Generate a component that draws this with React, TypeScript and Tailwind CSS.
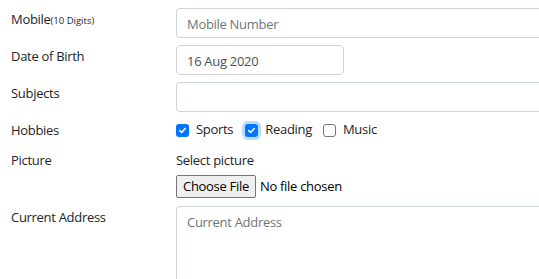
import React from "react";

const Check = ({ checked, focus }: { checked: boolean; focus?: boolean }) => (
  <span
    className={
      "inline-flex h-[13px] w-[13px] shrink-0 items-center justify-center rounded-[3px] " +
      (checked ? "bg-[#0075ff] " : "border border-[#767676] bg-white ") +
      (focus ? "shadow-[0_0_0_3px_#bcdcff]" : "")
    }
  >
    {checked && (
      <svg width="9" height="9" viewBox="0 0 10 10">
        <path d="M2 5.2 L4.1 7.2 L8 2.8" fill="none" stroke="white" strokeWidth="1.8" strokeLinecap="round" strokeLinejoin="round" />
      </svg>
    )}
  </span>
);

export default function App() {
  return (
    <div
      className="h-[279px] w-[539px] overflow-hidden bg-white text-[13px] tracking-[-0.3px] text-[#212529]"
      style={{ fontFamily: '"Open Sans", "Noto Sans", sans-serif' }}
    >
      <div className="flex w-[620px] flex-col pt-[8px] pl-[11px]">
        <div className="flex h-[30px]">
          <div className="w-[165px] pt-[1px] leading-[20px]">
            Mobile<span className="text-[9.5px] tracking-normal">(10 Digits)</span>
          </div>
          <div className="flex-1 rounded-[4px] border border-[#ced4da] px-[10px] pt-[1px] leading-[28px] text-[#6c757d]">
            Mobile Number
          </div>
        </div>
        <div className="mt-[7px] flex h-[30px]">
          <div className="w-[165px] pt-[1px] leading-[20px]">Date of Birth</div>
          <div className="w-[168px] rounded-[4px] border border-[#ced4da] px-[10px] pt-[1px] leading-[28px] text-[#495057]">
            16 Aug 2020
          </div>
        </div>
        <div className="mt-[7px] flex h-[30px]">
          <div className="w-[165px] pt-[1px] leading-[20px]">Subjects</div>
          <div className="flex-1 rounded-[4px] border border-[#ced4da]" />
        </div>
        <div className="mt-[8px] flex h-[20px] items-center">
          <div className="w-[165px] leading-[20px]">Hobbies</div>
          <div className="flex items-center">
            <Check checked />
            <span className="ml-[7px] mr-[12px]">Sports</span>
            <Check checked focus />
            <span className="ml-[7px] mr-[11px]">Reading</span>
            <Check checked={false} />
            <span className="ml-[7px]">Music</span>
          </div>
        </div>
        <div className="mt-[10px] flex">
          <div className="w-[165px] leading-[20px]">Picture</div>
          <div className="flex flex-col">
            <div className="leading-[20px]">Select picture</div>
            <div className="mt-[5px] flex items-center">
              <span className="rounded-[2px] border border-[#767676] bg-[#efefef] px-[6px] leading-[21px] text-black">
                Choose File
              </span>
              <span className="ml-[4px] text-black">No file chosen</span>
            </div>
          </div>
        </div>
        <div className="mt-[8px] flex">
          <div className="w-[165px] pt-[1px] leading-[20px]">Current Address</div>
          <div className="h-[90px] flex-1 rounded-[4px] border border-[#ced4da] px-[10px] pt-[5px] leading-[20px] text-[#6c757d]">
            Current Address
          </div>
        </div>
      </div>
    </div>
  );
}
